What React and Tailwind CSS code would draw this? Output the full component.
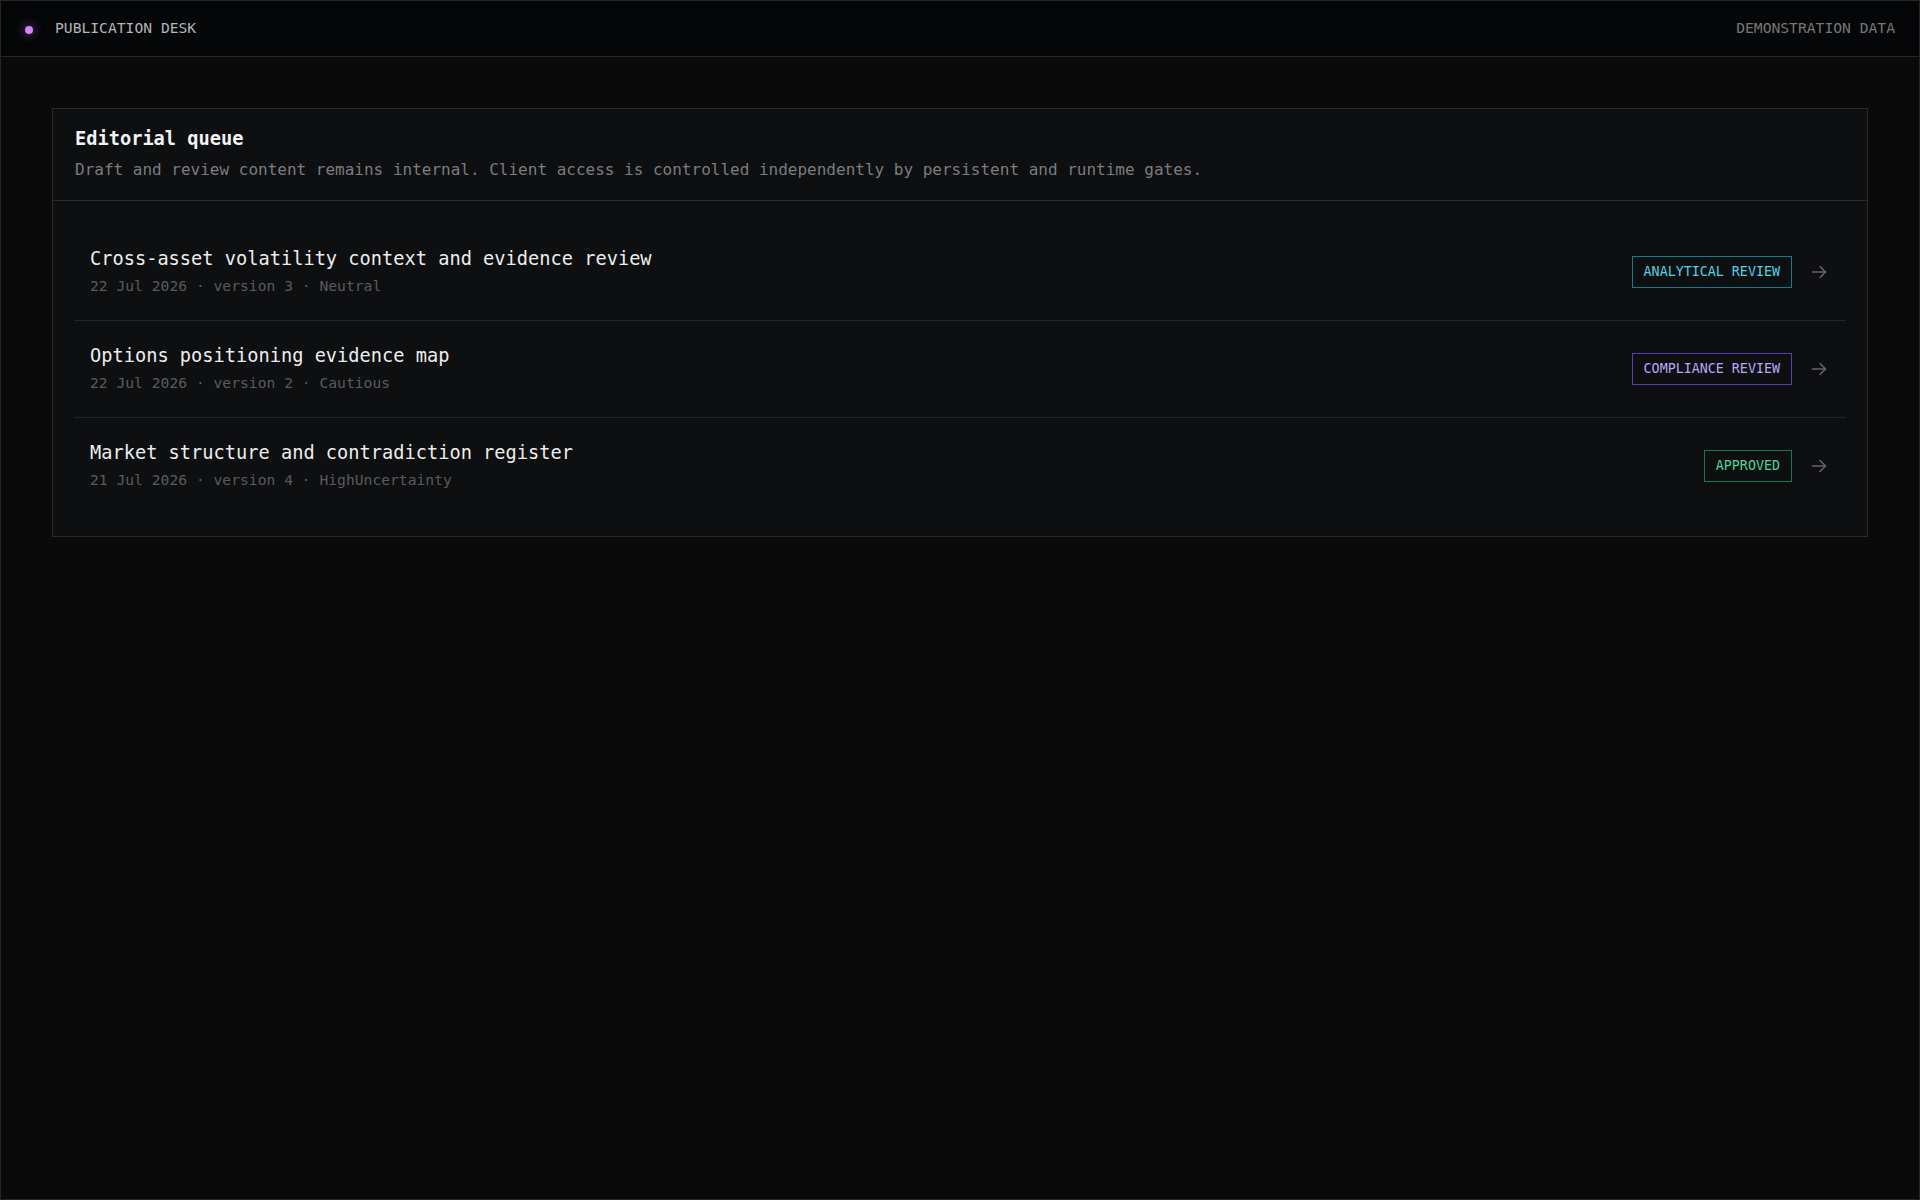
import React from 'react';

// Queue rows shown in the editorial desk
const items = [
    {
        title: 'Cross-asset volatility context and evidence review',
        date: '22 Jul 2026',
        version: 3,
        stance: 'Neutral',
        status: 'analytical',
    },
    {
        title: 'Options positioning evidence map',
        date: '22 Jul 2026',
        version: 2,
        stance: 'Cautious',
        status: 'compliance',
    },
    {
        title: 'Market structure and contradiction register',
        date: '21 Jul 2026',
        version: 4,
        stance: 'HighUncertainty',
        status: 'approved',
    },
];

const statusStyles = {
    analytical: { label: 'ANALYTICAL REVIEW', cls: 'border-[#177a8c] text-[#52d3e2]' },
    compliance: { label: 'COMPLIANCE REVIEW', cls: 'border-[#5a3fae] text-[#b7a7f4]' },
    approved: { label: 'APPROVED', cls: 'border-[#17774f] text-[#4cd69b]' },
};

const StatusBadge = ({ status }) => {
    const s = statusStyles[status];
    return (
        <span className={`border px-[11px] py-[5px] text-[13.33px] leading-5 whitespace-nowrap ${s.cls}`}>
            {s.label}
        </span>
    );
};

const ArrowRight = () => (
    <svg width="16" height="16" viewBox="0 0 16 16" fill="none" stroke="#666668" strokeWidth="1.5" strokeLinecap="round" strokeLinejoin="round">
        <path d="M1.5 8h13" />
        <path d="M9 2.5l5.5 5.5-5.5 5.5" />
    </svg>
);

const QueueRow = ({ item, last }) => (
    <div className={`flex items-center justify-between pl-4 pr-[19px] ${last ? 'h-[96px]' : 'h-[97px] border-b border-[#232427]'}`}>
        <div className="flex flex-col pb-1">
            <span className="text-[18.67px] leading-7 text-[#ededed]">{item.title}</span>
            <span className="mt-[3px] text-[14.67px] leading-5 text-[#5b5b5d]">
                {item.date} · version {item.version} · {item.stance}
            </span>
        </div>
        <div className="flex items-center gap-[19px]">
            <StatusBadge status={item.status} />
            <ArrowRight />
        </div>
    </div>
);

const App = () => {
    return (
        <div
            className="min-h-screen bg-[#0a0a0a] border border-[#262626] flex flex-col"
            style={{ fontFamily: '"DejaVu Sans Mono", "Liberation Mono", monospace' }}
        >
            <header className="h-[56px] shrink-0 flex items-center justify-between px-6 pb-[2px] bg-[#050608] border-b border-[#262728]">
                <div className="flex items-center">
                    <span className="mt-[4px] w-2 h-2 rounded-full bg-[#d782f8] shadow-[0_0_10px_3px_rgba(190,110,240,0.25)]" />
                    <span className="ml-[22px] text-[14.67px] leading-[22px] text-[#b4b4b4]">PUBLICATION DESK</span>
                </div>
                <span className="text-[14.67px] leading-[22px] text-[#767676]">DEMONSTRATION DATA</span>
            </header>

            <main className="px-[51px] pt-[51px]">
                <section className="bg-[#0e0f11] border border-[#2a2b2d]">
                    <div className="px-[22px] pt-4 pb-[18px] border-b border-[#2a2b2d]">
                        <h2 className="text-[18.67px] leading-7 font-bold text-[#f2f2f2]">Editorial queue</h2>
                        <p className="mt-[5px] text-[16px] leading-6 text-[#7c7c7e]">
                            Draft and review content remains internal. Client access is controlled independently by persistent and runtime gates.
                        </p>
                    </div>
                    <div className="px-[21px] pt-[23px] pb-[22px]">
                        {items.map((item, i) => (
                            <QueueRow key={item.title} item={item} last={i === items.length - 1} />
                        ))}
                    </div>
                </section>
            </main>
        </div>
    );
};

export default App;
